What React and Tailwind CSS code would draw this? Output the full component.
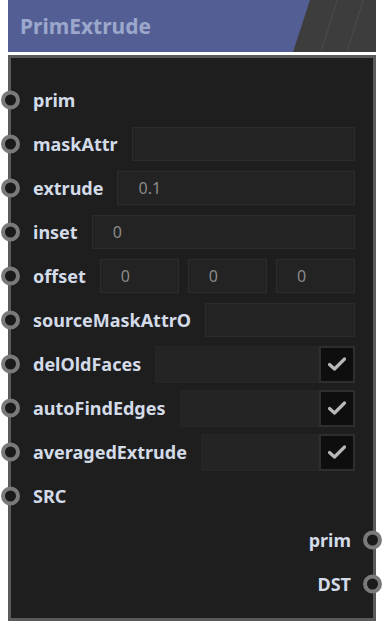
import React from "react";

const font = { fontFamily: '"Noto Sans", "Open Sans", sans-serif' };

function Port({ side = "left" }) {
  return (
    <span
      className={`absolute top-1/2 -translate-y-1/2 w-[19px] h-[19px] rounded-full border-[4px] border-[#7a7a7a] bg-[#1a1a1a] ${
        side === "left" ? "left-[-10px]" : "right-[-9px]"
      }`}
    />
  );
}

function Label({ children }) {
  return <span className="text-[18px] font-bold text-[#d3dbe8] leading-none whitespace-nowrap">{children}</span>;
}

function Field({ value }) {
  return (
    <div className="flex-1 h-[34px] bg-[#232323] border border-[#2c2c2c] flex items-center pl-[20px] text-[16px] text-[#8a8a8a]">
      {value}
    </div>
  );
}

function Row({ label, children }) {
  return (
    <div className="relative h-[44px] flex items-center pl-[22px] pr-[18px] gap-[14px]">
      <Port />
      <Label>{label}</Label>
      {children}
    </div>
  );
}

function CheckRow({ label }) {
  return (
    <Row label={label}>
      <div className="flex-1 h-[37px] flex">
        <div className="flex-1 bg-[#242424] border border-[#262626]" />
        <div className="w-[36px] h-[37px] bg-[#0e0e0e] border-[2px] border-[#2e2e2e] flex items-center justify-center">
          <svg width="20" height="16" viewBox="0 0 20 16">
            <path d="M2.5 8.5 L7.5 13 L17.5 3" fill="none" stroke="#b8b8b8" strokeWidth="3.2" strokeLinecap="round" strokeLinejoin="round" />
          </svg>
        </div>
      </div>
    </Row>
  );
}

export default function App() {
  return (
    <div className="w-[384px] h-[621px] bg-white overflow-hidden" style={font}>
      {/* title bar */}
      <div className="relative mx-[8px] h-[52px] bg-[#535f94] flex items-center pl-[12px] overflow-hidden">
        <span className="text-[21px] font-bold text-[#9ca7cc] leading-none">PrimExtrude</span>
        <svg className="absolute right-0 top-0" width="83" height="52" viewBox="0 0 83 52">
          <polygon points="17,0 83,0 83,52 0,52" fill="#3d3d3d" />
          <line x1="44" y1="0" x2="28" y2="52" stroke="#4c4c4c" strokeWidth="1" />
          <line x1="70" y1="0" x2="54" y2="52" stroke="#4c4c4c" strokeWidth="1" />
        </svg>
      </div>

      {/* body */}
      <div className="mt-[3px] mx-[8px] h-[566px] border-[3px] border-[#5a5a5a] bg-[#1e1e1e] pt-[20px]">
        <Row label="prim" />
        <Row label="maskAttr">
          <Field />
        </Row>
        <Row label="extrude">
          <Field value="0.1" />
        </Row>
        <Row label="inset">
          <Field value="0" />
        </Row>
        <Row label="offset">
          <div className="flex-1 flex gap-[9px]">
            <Field value="0" />
            <Field value="0" />
            <Field value="0" />
          </div>
        </Row>
        <Row label="sourceMaskAttrO">
          <Field />
        </Row>
        <CheckRow label="delOldFaces" />
        <CheckRow label="autoFindEdges" />
        <CheckRow label="averagedExtrude" />
        <Row label="SRC" />
        <div className="relative h-[44px] flex items-center justify-end pr-[22px]">
          <Label>prim</Label>
          <Port side="right" />
        </div>
        <div className="relative h-[44px] flex items-center justify-end pr-[22px]">
          <Label>DST</Label>
          <Port side="right" />
        </div>
      </div>
    </div>
  );
}
